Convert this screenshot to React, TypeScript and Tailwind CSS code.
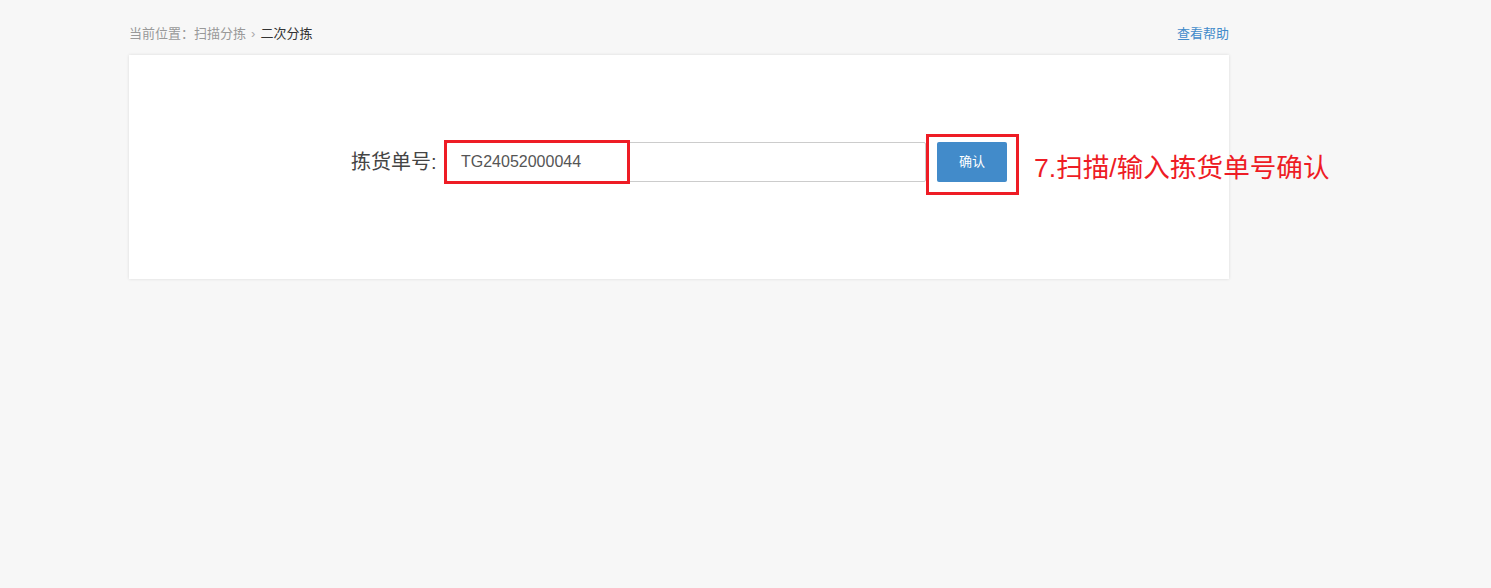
const FONT = "font-['Liberation_Sans','Noto_Sans_CJK_SC',sans-serif]";

export default function App() {
  return (
    <div className={`min-h-[588px] bg-[#f7f7f7] ${FONT}`}>
      <div className="ml-[129px] w-[1100px] pt-[25px]">
        <div className="flex items-center justify-between h-[18px] text-[13px]">
          <div className="flex items-center text-[#999]">
            <span>当前位置：</span>
            <span>扫描分拣</span>
            <span className="mx-[5px] text-[#aaa]">›</span>
            <span className="text-[#333]">二次分拣</span>
          </div>
          <a className="text-[#428bca] cursor-pointer">查看帮助</a>
        </div>

        <div className="relative mt-[12px] h-[224px] bg-white shadow-[0_0_3px_rgba(0,0,0,0.12)]">
          <div className="flex items-center pt-[87px] pl-[222px]">
            <label className="text-[20px] text-[#444] w-[95px]">拣货单号:</label>
            <div className="w-[480px] h-[40px] border border-[#ccc] rounded-[2px] flex items-center pl-[14px] text-[16px] text-[#555]">
              TG24052000044
            </div>
            <button className="ml-[11px] w-[70px] h-[40px] rounded-[2px] bg-[#428bca] text-white text-[13px]">
              确认
            </button>
          </div>

          {/* annotation overlays */}
          <div className="absolute left-[315px] top-[85px] w-[186px] h-[44px] border-[3px] border-[#ee1c25]" />
          <div className="absolute left-[797px] top-[79px] w-[93px] h-[61px] border-[3px] border-[#ee1c25]" />
          <div className="absolute left-[905px] top-[96px] whitespace-nowrap text-[26.6px] leading-[34px] text-[#ee1c25]">
            7.扫描/输入拣货单号确认
          </div>
        </div>
      </div>
    </div>
  );
}
